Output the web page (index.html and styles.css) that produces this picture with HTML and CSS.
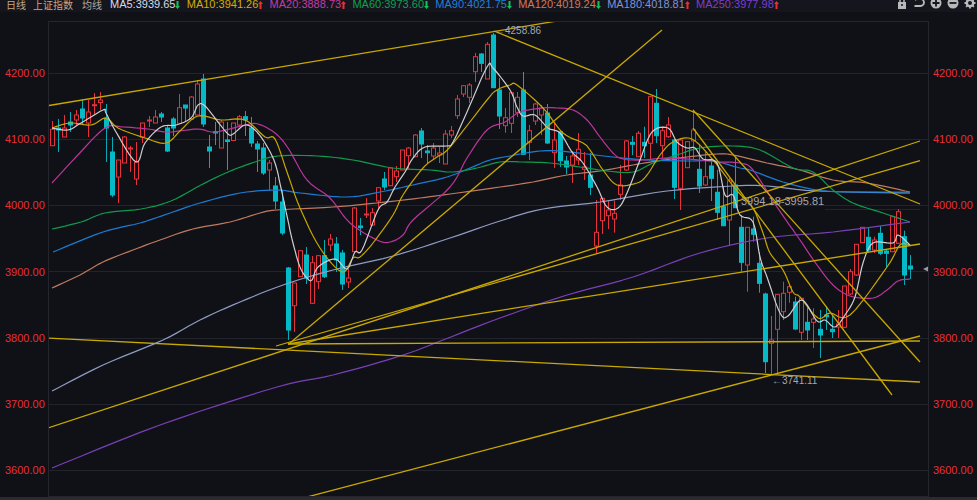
FILE: index.html
```html
<!DOCTYPE html>
<html lang="zh">
<head>
<meta charset="utf-8">
<title>上证指数 日线</title>
<link rel="stylesheet" href="styles.css">
</head>
<body>
<div class="app">
  <header class="topbar">
    <div class="titles">
      <span class="title">日线</span>
      <span class="title">上证指数</span>
      <span class="title title-muted">均线</span>
    </div>
    <ul class="legend">
      <li class="ma ma5">MA5:3939.65<svg class="arrow down" viewBox="0 0 5 8"><path d="M1.5 0h2v5H5L2.500 8 0 5h1.500z"/></svg></li>
      <li class="ma ma10">MA10:3941.26<svg class="arrow up" viewBox="0 0 5 8"><path d="M1.500 8h2V3H5L2.500 0 0 3h1.500z"/></svg></li>
      <li class="ma ma20">MA20:3888.73<svg class="arrow up" viewBox="0 0 5 8"><path d="M1.500 8h2V3H5L2.500 0 0 3h1.500z"/></svg></li>
      <li class="ma ma60">MA60:3973.60<svg class="arrow down" viewBox="0 0 5 8"><path d="M1.500 0h2v5H5L2.500 8 0 5h1.500z"/></svg></li>
      <li class="ma ma90">MA90:4021.75<svg class="arrow down" viewBox="0 0 5 8"><path d="M1.500 0h2v5H5L2.500 8 0 5h1.500z"/></svg></li>
      <li class="ma ma120">MA120:4019.24<svg class="arrow down" viewBox="0 0 5 8"><path d="M1.500 0h2v5H5L2.500 8 0 5h1.500z"/></svg></li>
      <li class="ma ma180">MA180:4018.81<svg class="arrow up" viewBox="0 0 5 8"><path d="M1.500 8h2V3H5L2.500 0 0 3h1.500z"/></svg></li>
      <li class="ma ma250">MA250:3977.98<svg class="arrow up" viewBox="0 0 5 8"><path d="M1.500 8h2V3H5L2.500 0 0 3h1.500z"/></svg></li>
    </ul>
    <div class="tools">
      <svg class="tool" viewBox="0 0 12 12"><path class="tool-line" d="M4 6V3.500a2 2 0 0 1 4 0V6"/><path class="tool-fill" d="M2 5h8v7H2z"/><circle class="tool-hole" cx="6" cy="8" r="1"/></svg>
      <svg class="tool" viewBox="0 0 12 12"><path class="tool-line wide" d="M3 2h4.500a3.200 3.200 0 0 1 0 7H1.500"/><path class="tool-fill" d="M3.200 0v4L.5 2z"/></svg>
      <svg class="tool" viewBox="0 0 12 12"><circle class="tool-fill" cx="6" cy="6" r="5.500"/><path class="tool-cut" d="M2.500 6h7M6 2.500v7"/></svg>
      <svg class="tool" viewBox="0 0 12 12"><circle class="tool-fill" cx="6" cy="6" r="5.500"/><path class="tool-cut" d="M2.500 6h7"/></svg>
      <svg class="tool" viewBox="0 0 12 12"><circle class="tool-line gear" cx="6" cy="6" r="3.200"/><path class="tool-line wide" d="M6 .5v2M6 9.500v2M.5 6h2M9.500 6h2M2.100 2.100l1.400 1.400M8.500 8.500l1.400 1.400M2.100 9.900l1.400-1.400M8.500 3.500l1.400-1.400"/></svg>
    </div>
  </header>
  <main class="chart">
    <div class="axis axis-left">
      <div class="tick">4200.00</div><div class="tick">4100.00</div><div class="tick">4000.00</div><div class="tick">3900.00</div><div class="tick">3800.00</div><div class="tick">3700.00</div><div class="tick">3600.00</div>
    </div>
    <div class="plot">
      <svg class="plot-svg" viewBox="49 22 880 474" aria-label="K线图">
        <g class="grid">
          <path d="M49 73.500H929M49 139.500H929M49 205.500H929M49 271.500H929M49 338.500H929M49 404.500H929M49 470.500H929M825 209.500H920"/>
        </g>
        <g id="candles"></g>
        <g class="mas">
          <polyline class="l-ma250" points="52,468 160,425 277,387 333,375 400,356 443,340 500,318 567,295 633,277 700,253 767,238 833,232 910,222"/>
          <polyline class="l-ma180" points="52,391 103,365 163,340 200,320 240,302 283,285 333,270 393,256 450,238 500,221 543,209 600,202 667,191 733,186 767,186 817,191 910,193"/>
          <polyline class="l-ma120" points="52,288 80,275 103,262 133,250 160,240 193,229 230,222 260,213 277,210 333,207 377,203 420,198 450,194 500,187 533,182 567,175 600,171 633,165 657,161 687,157 717,154 733,155 767,163 800,170 833,180 867,183 910,192"/>
          <polyline class="l-ma90" points="53,252 103,232 140,223 173,212 200,203 240,193 277,190 300,193 347,197 380,192 413,185 447,177 470,168 490,160 510,156 520,154 540,151 560,151 587,154 613,157 647,160 687,161 713,161 740,168 750,170 783,182 817,190 850,192 910,192"/>
          <polyline class="l-ma60" points="52,229 81,222 105,213 141,209 171,201 201,185 228,172 255,162 278,156 317,156 353,160 393,168 430,170 453,172 477,168 500,162 523,162 550,163 580,167 607,171 633,172 653,163 677,155 700,148 733,146 760,150 793,168 813,172 833,190 853,203 883,213 910,222"/>
          <polyline class="l-ma20" points="52,183 76,157 105,128 123,127 148,129 168,132 198,129 215,132 245,125 258,124 275,133 288,148 307,180 330,198 350,223 377,240 390,242 403,235 413,220 450,187 467,158 487,130 505,122 520,112 543,108 557,108 573,110 587,120 600,137 613,153 623,159 643,160 667,158 700,160 720,162 740,163 753,170 777,207 800,240 817,265 833,285 850,296 873,298 887,290 898,281 910,279"/>
          <polyline class="l-ma10" points="52,128 70,123 91,125 106,118 118,128 145,138 166,143 181,130 198,116 221,120 245,120 265,137 275,139 287,172 300,208 320,248 342,272 353,258 360,257 373,243 393,215 403,195 423,168 437,157 450,147 487,100 497,90 510,85 517,85 543,108 563,133 583,143 590,150 603,170 617,185 637,183 647,175 660,155 673,142 692,139 713,160 730,182 739,193 753,208 763,233 770,253 783,270 793,292 800,297 818,318 830,313 850,315 887,267 900,245 910,245"/>
          <polyline class="l-ma5" points="52,128 68,130 81,123 103,110 106,113 116,132 136,162 145,143 161,127 176,125 191,118 198,105 205,106 218,122 228,134 233,134 245,125 255,130 265,143 275,163 281,188 287,216 293,243 300,267 307,278 312,280 318,267 335,259 347,269 355,252 362,250 378,210 387,202 395,187 405,172 413,158 425,147 447,146 453,142 467,112 487,67 493,68 510,90 517,107 523,116 535,115 548,128 560,133 572,152 583,163 597,187 607,207 618,208 627,193 640,160 652,132 668,128 677,142 687,148 695,148 703,159 717,163 725,195 733,195 740,215 753,222 760,257 767,277 780,313 788,316 802,300 817,321 825,320 835,327 845,315 855,297 863,263 873,243 893,243 898,235 910,245"/>
        </g>
        <g class="trends">
          <line x1="48" y1="105.700" x2="557" y2="21"/>
          <line x1="494" y1="31" x2="920" y2="204"/>
          <line x1="290" y1="343" x2="662" y2="30"/>
          <line x1="48" y1="428" x2="920" y2="141"/>
          <line x1="276" y1="346" x2="920" y2="160.700"/>
          <line x1="288" y1="344" x2="920" y2="244"/>
          <line x1="288" y1="344" x2="920" y2="341"/>
          <line x1="48" y1="338" x2="920" y2="382"/>
          <line x1="307" y1="497" x2="920" y2="336"/>
          <line x1="693" y1="110" x2="920" y2="362"/>
          <line x1="693" y1="128" x2="892" y2="395"/>
        </g>
        <g class="notes">
          <text x="495" y="34">←4258.86</text>
          <text class="note-range" x="741" y="205">3994.18-3995.81</text>
          <text x="772" y="384">←3741.11</text>
        </g>
        <path class="last-mark" d="M923 269l5-2.500v5z"/>
      </svg>
    </div>
    <div class="axis axis-right">
      <div class="tick">4200.00</div><div class="tick">4100.00</div><div class="tick">4000.00</div><div class="tick">3900.00</div><div class="tick">3800.00</div><div class="tick">3700.00</div><div class="tick">3600.00</div>
    </div>
  </main>
  <div class="statusbar"></div>
</div>
<script src="chart.js"></script>
</body>
</html>
```
FILE: styles.css
```css
* { box-sizing: border-box; }
html, body { margin: 0; padding: 0; }
body {
  width: 977px;
  height: 500px;
  overflow: hidden;
  background: #101117;
  font-family: "Liberation Sans", "Noto Sans CJK SC", sans-serif;
}
.app {
  display: flex;
  flex-direction: column;
  height: 500px;
}
.topbar {
  display: flex;
  align-items: flex-start;
  flex: 0 0 12px;
  height: 12px;
  margin-bottom: 9px;
  padding-left: 6px;
  background: #15161d;
  line-height: 9px;
  white-space: nowrap;
}
.titles {
  display: flex;
  gap: 7px;
  width: 104px;
  font-family: "Noto Sans CJK SC", sans-serif;
  font-size: 10px;
}
.title { color: #c8a882; }
.title-muted { margin-left: 2px; color: #b5aaa0; }
.legend {
  display: flex;
  gap: 6.300px;
  margin: 0;
  padding: 0;
  list-style: none;
  font-size: 11px;
}
.ma { display: flex; align-items: flex-start; }
.ma5 { color: #d5dbe5; }
.ma10 { color: #d6ae00; }
.ma20 { color: #c53aa6; }
.ma60 { color: #10a050; }
.ma90 { color: #2080d8; }
.ma120 { color: #d0785a; }
.ma180 { color: #7f93d8; }
.ma250 { color: #7c3ed0; }
.arrow {
  display: block;
  width: 5px;
  height: 8px;
  margin-top: 1px;
}
.arrow.up { fill: #f02c32; }
.arrow.down { fill: #12c25a; }
.tools {
  display: flex;
  gap: 5px;
  margin-left: auto;
  padding-right: 1px;
}
.tool {
  display: block;
  width: 12px;
  height: 12px;
  margin-top: -3px;
}
.tool-line { fill: none; stroke: #b9b9bc; stroke-width: 1.500; }
.tool-line.wide { stroke-width: 1.800; }
.tool-line.gear { stroke-width: 2.400; }
.tool-fill { fill: #b9b9bc; }
.tool-hole { fill: #15161d; }
.tool-cut { fill: none; stroke: #15161d; stroke-width: 1.800; }

.chart {
  display: flex;
  flex: 0 0 476px;
  height: 476px;
}
.axis {
  flex: 0 0 48px;
  width: 48px;
  padding-top: 45px;
  color: #e72f36;
  font-size: 11px;
}
.axis-left { padding-left: 5px; }
.axis-right { padding-left: 4px; }
.tick {
  height: 66.200px;
  line-height: 14px;
}
.tick:last-child { height: 14px; }
.plot {
  flex: 0 0 881px;
  width: 881px;
  border: 1px solid #24252d;
  border-right-width: 0;
  position: relative;
}
.plot::after {
  content: "";
  position: absolute;
  top: 0;
  right: 0;
  bottom: 0;
  width: 1px;
  background: #24252d;
}
.plot-svg {
  display: block;
  width: 880px;
  height: 474px;
}
.grid path { fill: none; stroke: #22232b; stroke-width: 1; }
.candle-wick { stroke-width: 1; }
.candle-red .candle-wick { stroke: #e5333b; }
.candle-red .candle-body { fill: #101117; stroke: #e5333b; stroke-width: 1; }
.candle-teal .candle-wick { stroke: #06aab6; }
.candle-teal .candle-body { fill: #06b9c6; stroke: #06b9c6; stroke-width: 1; }
.mas polyline {
  fill: none;
  stroke-width: 1.200;
  stroke-linejoin: round;
}
.l-ma5 { stroke: #cfcfd2; }
.l-ma10 { stroke: #c9a700; }
.l-ma20 { stroke: #bd359a; }
.l-ma60 { stroke: #109a4c; }
.l-ma90 { stroke: #1c7cd2; }
.l-ma120 { stroke: #bf7a60; }
.l-ma180 { stroke: #8e9cc4; }
.l-ma250 { stroke: #7a40b8; }
.trends line { stroke: #c9a800; stroke-width: 1.300; }
.notes text {
  fill: #a5a7ad;
  font-family: "Liberation Sans", sans-serif;
  font-size: 10px;
}
.notes .note-range { font-size: 11px; }
.last-mark { fill: #9a9ba0; }
.statusbar {
  flex: 1 1 auto;
  background: #2a2b2f;
}
```
FILE: chart.js
```js
// [colour, high, body top, body bottom, low] in page pixels, one entry per trading day
var days = [
['r',121,129.3,145.7,145.7],['t',119,128,130,152],['r',115,128,137,137],['t',112,122,125,132],['r',110,115,120,125],
['t',99,109,118,125],['r',100,112,123,137],['r',93,104.7,105.7,115],['r',92,100,102.5,110],['t',104,118,128,162],
['t',137,152,195,197],['r',160,160,177,203],['r',136,137,163,163],['r',146,148,149,172],['r',142,162,179,185],
['r',123,123,137,143],['r',116,120,121,127],['r',110,117,123,123],['t',112,114,117,122],['t',125,128,151,152],
['t',117,119,128,136],['r',94,107.7,123.3,123.3],['t',105,105,108,121],['r',96,97,119,119],['r',80,84,115,115],
['t',74,79,124,127],['t',135,147,151,168],['t',122,131.7,133,145],['r',120,122,148,148],['t',122,140,141.5,170],
['r',123,123,140.5,141],['r',115,116.7,125,127],['t',111,116.7,120,136],['t',117,128,143,147],['t',141,144,149,172],
['t',143,148,173,175],['r',160,163,170,190],['t',177,186,201,209],['t',190,202,233,235],['t',267,268,330,340],
['r',283,283,305.7,332],['r',250,250.7,276.7,277],['t',247,255,278,284],['r',256,262.7,303.3,304],['r',255,255.7,281.7,289],
['t',240,255.7,276.7,278],['r',234,239,245,251],['t',237,244,260,272],['t',250,253,284,290],['r',269,278,282,288],
['r',207,208,251.7,252],['t',218,226,227.7,235],['r',198,214,215,218],['r',208,212.7,225,226],['r',187,187.7,201,210],
['t',172,179,187,190],['r',168,168,185.7,186],['r',166,171,176.7,182],['r',150,150,170,170],['r',147,148,155.7,169],
['r',134,135,156.7,157],['t',128,131,144,158],['t',145,151,152.7,164],['r',143,148,156,160],['r',147,153,155,163],
['r',130,134,164,164],['r',126,130.7,135,138],['r',95,99,115.7,119],['r',85,85.7,94,97],['r',83,85,97.3,103],
['r',53,56.7,71.7,82],['t',53,54,63.3,72],['r',42,44.3,79,79],['t',33,35,87.7,88],['t',78,90,116,129],
['r',108,117.7,125.7,132.7],['r',92,92.7,123.3,133],['r',92,97.3,112.3,117],['t',72,90,154.3,155],['r',125,130.7,142.3,160],
['r',103,104,121,125],['r',105,108,115,135],['t',104,113,143,144],['r',123,140,152.7,168],['t',130,131.7,160.7,167],
['t',156,161,167,174],['r',151,156,165,183],['r',133,149.3,160,165],['r',152,167,169.3,180],['t',153,175,187.3,195],
['r',200,232.3,246,253],['r',198,198.3,220.7,234],['r',200.7,210,215.7,229],['r',200.7,213.3,219,232.7],['r',165,185,194.3,200],
['r',140,141,170,171],['t',136,142.3,144.3,155],['r',131,133.3,156.7,157],['t',126.7,142.3,145.7,158],['r',96,96.7,143.3,159],
['t',89,103.3,135.7,143],['r',128,130.7,145.7,158],['r',117,125,136.7,138],['t',139,140,187.3,199],['r',138,140,188.3,210],
['r',141,141.7,167.7,168],['r',110,130,141,159],['t',145,169.3,186,193],['r',152,176.7,185,186],['t',158,166,178.3,201],
['t',170,192.3,212.3,220],['t',186.7,206.7,225.7,226],['r',178,180.7,220,245],['t',156.7,185,207.7,208],['t',215,227.3,262.3,271.7],
['r',227,227.3,265,291.7],['t',216.7,229,234.3,241.7],['t',252,263.3,283.3,292.7],['t',292.7,294,361.7,373],['r',316,340,343.3,374],
['r',294,294.3,329.3,373],['r',281.7,293.3,311.7,320],['r',285,286.7,292.3,302.7],['t',296.7,302,329,330],['r',298,298.3,332.3,340],
['t',307.3,322.3,330,340],['r',308.3,319,322.3,348],['t',310,329.3,335,358],['t',306,315,316.7,330],['t',316,329.3,331.7,338],
['r',310,324,327,338],['r',286,286,327.3,328],['r',269,271.7,294,295],['r',244,244.3,275,276],['r',227,227.3,242.7,243],
['t',227,237.3,250,252],['r',236.7,240,250,253],['t',226,233.3,253.3,255],['t',250,251,253.3,267],['r',216,216.7,251.7,252],
['r',209,211.7,243.3,244],['t',230.7,236.7,275,285],['t',255,266,269,279]
];

var NS = 'http://www.w3.org/2000/svg';
var host = document.getElementById('candles');

function make(name, attrs, parent) {
  var el = document.createElementNS(NS, name);
  for (var key in attrs) { el.setAttribute(key, attrs[key]); }
  parent.appendChild(el);
  return el;
}

days.forEach(function (day, i) {
  var x = Math.floor(52.3 + 6.045 * i) + 0.5;
  var group = make('g', { 'class': day[0] === 'r' ? 'candle-red' : 'candle-teal' }, host);
  make('line', { 'class': 'candle-wick', x1: x, x2: x, y1: day[1], y2: day[4] }, group);
  make('rect', { 'class': 'candle-body', x: x - 2, y: day[2], width: 4, height: day[3] - day[2] }, group);
});

// Round the moving-average polylines with Catmull-Rom interpolation.
function smooth(points, steps) {
  var out = [];
  for (var i = 0; i < points.length - 1; i++) {
    var p0 = points[Math.max(i - 1, 0)];
    var p1 = points[i];
    var p2 = points[i + 1];
    var p3 = points[Math.min(i + 2, points.length - 1)];
    for (var s = 0; s < steps; s++) {
      var t = s / steps;
      var t2 = t * t;
      var t3 = t2 * t;
      out.push([0, 1].map(function (k) {
        return (0.5 * (2 * p1[k] + (p2[k] - p0[k]) * t +
          (2 * p0[k] - 5 * p1[k] + 4 * p2[k] - p3[k]) * t2 +
          (3 * p1[k] - p0[k] - 3 * p2[k] + p3[k]) * t3)).toFixed(1);
      }).join(','));
    }
  }
  out.push(points[points.length - 1].join(','));
  return out.join(' ');
}

Array.prototype.forEach.call(document.querySelectorAll('.mas polyline'), function (line) {
  var points = line.getAttribute('points').split(' ').map(function (pair) {
    return pair.split(',').map(Number);
  });
  line.setAttribute('points', smooth(points, 6));
});
```
